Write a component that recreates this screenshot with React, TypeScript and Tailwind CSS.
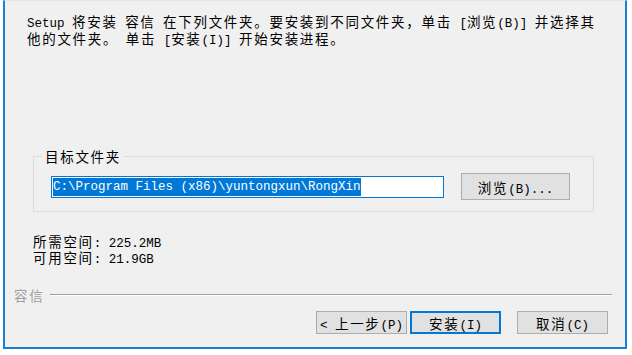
import React from "react";

function Mix({ text }: { text: string }) {
  const parts = text.match(/[\x00-\x7F]+|[^\x00-\x7F]+/g) || [];
  return (
    <span>
      {parts.map((p, i) =>
        /^[\x00-\x7F]+$/.test(p) ? (
          <span key={i} className="font-['Liberation_Mono'] text-[12.5px] leading-[0] whitespace-pre">
            {p}
          </span>
        ) : (
          <span key={i} className="tracking-[1.7px] leading-[0]">
            {p}
          </span>
        )
      )}
    </span>
  );
}

function Btn({ label, primary }: { label: string; primary?: boolean }) {
  return (
    <div
      className={
        "flex h-[23px] w-[91px] items-center justify-center bg-[#e1e1e1] leading-[16px] text-black " +
        (primary ? "border-2 border-[#0078d7]" : "border border-[#adadad]")
      }
    >
      <Mix text={label} />
    </div>
  );
}

export default function App() {
  return (
    <div className="h-[355px] w-[632px] overflow-hidden bg-white font-['Noto_Sans_CJK_SC','Noto_Sans',sans-serif] text-[13.5px] text-black">
      <div className="ml-[3px] flex h-[349px] w-[624px] flex-col border-x-2 border-b-2 border-t border-x-[#1a7fd4] border-b-[#1a7fd4] border-t-[#e4e4e4] bg-[#f0f0f0]">
        <div className="pl-[22px] pr-[4px] pt-[12px] leading-[17px]">
          <div className="whitespace-nowrap">
            <Mix text="Setup 将安装 容信 在下列文件夹。要安装到不同文件夹，单击 [浏览(B)] 并选择其" />
          </div>
          <div className="whitespace-nowrap">
            <Mix text="他的文件夹。 单击 [安装(I)] 开始安装进程。" />
          </div>
        </div>

        <div className="relative ml-[28px] mt-[109px] h-[56px] w-[561px] border border-[#dcdcdc]">
          <div className="absolute left-[8px] top-[-10px] bg-[#f0f0f0] px-[3px] leading-[18px]">
            <Mix text="目标文件夹" />
          </div>
          <div className="flex items-center pl-[17px] pt-[16px]">
            <div className="flex h-[22px] w-[393px] items-center border border-[#0078d7] bg-white pl-px">
              <span className="bg-[#0078d7] font-['Liberation_Mono'] text-[12.5px] leading-[18px] text-white whitespace-pre">
                C:\Program Files (x86)\yuntongxun\RongXin
              </span>
            </div>
            <div className="ml-[17px] flex h-[27px] w-[109px] items-center justify-center border border-[#adadad] bg-[#e1e1e1] leading-[16px]">
              <Mix text="浏览(B)..." />
            </div>
          </div>
        </div>

        <div className="ml-[28px] mt-[21px] leading-[16px]">
          <div className="whitespace-nowrap">
            <Mix text="所需空间: 225.2MB" />
          </div>
          <div className="whitespace-nowrap">
            <Mix text="可用空间: 21.9GB" />
          </div>
        </div>

        <div className="mt-[22px] flex h-[16px] items-center pl-[9px] pr-[13px]">
          <span className="leading-[16px] text-[#a0a0a0]">
            <Mix text="容信" />
          </span>
          <div className="ml-[6px] h-[2px] flex-1 border-b border-t border-b-white border-t-[#a0a0a0]" />
        </div>

        <div className="mt-[8px] flex justify-end pr-[17px]">
          <Btn label="< 上一步(P)" />
          <div className="w-[3px]" />
          <Btn label="安装(I)" primary />
          <div className="w-[16px]" />
          <Btn label="取消(C)" />
        </div>
      </div>
    </div>
  );
}
